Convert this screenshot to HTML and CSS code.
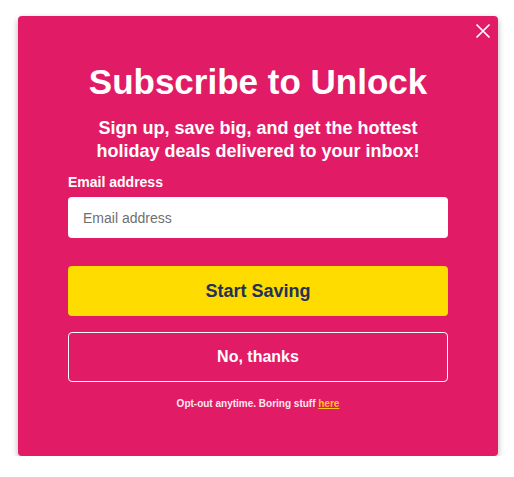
FILE: index.html
```html
<!DOCTYPE html>
<html lang="en">
<head>
    <meta charset="UTF-8">
    <meta name="viewport" content="width=device-width, initial-scale=1.0">
    <title>Subscribe to Unlock</title>
    <link rel="stylesheet" href="styles.css">
</head>
<body>

    <!-- Popup -->
    <div class="popup">
        <button class="close-button" aria-label="Close">
            <svg width="16" height="16" viewBox="0 0 16 16">
                <path d="M1.5 1.5 L14.5 14.5 M14.5 1.5 L1.5 14.5" stroke="#fff" stroke-width="1.7" fill="none"/>
            </svg>
        </button>

        <h1>Subscribe to Unlock</h1>
        <p class="subtitle">Sign up, save big, and get the hottest<br>holiday deals delivered to your inbox!</p>

        <form class="signup-form">
            <label for="email">Email address</label>
            <input type="email" id="email" placeholder="Email address">
            <button type="submit" class="save-button">Start Saving</button>
            <button type="button" class="no-button">No, thanks</button>
        </form>

        <p class="small-print">Opt-out anytime. Boring stuff <a href="#">here</a></p>
    </div>

</body>
</html>
```

FILE: styles.css
```css
body {
    font-family: "Liberation Sans", Arial, sans-serif;
    margin: 0;
    padding: 16px 0 0 18px;
    background-color: #fff;
}
.popup {
    position: relative;
    width: 480px;
    height: 440px;
    box-sizing: border-box;
    padding: 46px 50px 0 50px;
    background-color: #e21b66;
    border-radius: 4px;
    box-shadow: 0 3px 6px rgba(0, 0, 0, 0.3);
    color: white;
    text-align: center;
}
.close-button {
    position: absolute;
    top: 7px;
    right: 7px;
    width: 16px;
    height: 16px;
    padding: 0;
    border: none;
    background: none;
    cursor: pointer;
}
.close-button svg {
    display: block;
}
h1 {
    margin: 0;
    font-size: 35px;
    line-height: 40px;
    font-weight: bold;
}
.subtitle {
    margin: 15px 0 0 0;
    font-size: 18px;
    line-height: 23px;
    font-weight: bold;
}
.signup-form {
    margin-top: 11px;
    text-align: left;
}
.signup-form label {
    display: block;
    font-size: 14px;
    line-height: 16px;
    font-weight: bold;
    margin-bottom: 7px;
}
.signup-form input {
    display: block;
    width: 100%;
    height: 41px;
    box-sizing: border-box;
    padding: 0 15px;
    border: none;
    border-radius: 4px;
    font-family: inherit;
    font-size: 14px;
    color: #333;
}
.signup-form input::placeholder {
    color: #6f6f6f;
}
.save-button, .no-button {
    display: block;
    width: 100%;
    height: 50px;
    border-radius: 4px;
    font-family: inherit;
    font-weight: bold;
    cursor: pointer;
}
.save-button {
    margin-top: 28px;
    border: none;
    background-color: #fedc00;
    color: #23315a;
    font-size: 18px;
}
.no-button {
    margin-top: 16px;
    border: 1px solid #fff;
    background-color: transparent;
    color: white;
    font-size: 16px;
}
.small-print {
    margin: 15px 0 0 0;
    font-size: 10px;
    line-height: 14px;
    font-weight: bold;
    color: #fde8f0;
}
.small-print a {
    color: #fdc41e;
}
```
